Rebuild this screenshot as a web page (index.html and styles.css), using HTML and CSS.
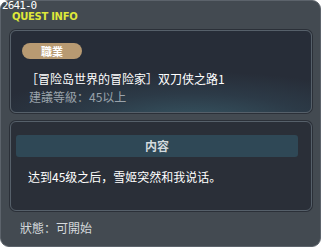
FILE: index.html
```html
<!DOCTYPE html>
<html lang="zh-CN">
<head>
	<meta charset="utf-8"/>
	<title>Quest Info</title>
	<link rel="stylesheet" href="styles.css">
</head>
<body>
<div class="quest_panel">
	<div class="quest_head">
		<div class="quest_id">2641-0</div>
		<div class="quest_title">QUEST INFO</div>
	</div>
	<div class="quest_box quest_box_job">
		<span class="job_badge">職業</span>
		<p class="job_name">［冒险岛世界的冒险家］双刀侠之路1</p>
		<p class="job_level">建議等級：45以上</p>
	</div>
	<div class="quest_box quest_box_desc">
		<div class="desc_bar">内容</div>
		<p class="desc_text">达到45级之后，雪姬突然和我说话。</p>
	</div>
	<div class="quest_state">狀態：可開始</div>
</div>
</body>
</html>
```

FILE: styles.css
```css
html,body{
	margin:0;
	padding:0;
	background:#fff;
}
body{
	font-family:"Noto Sans CJK SC","DejaVu Sans",sans-serif;
	font-size:12px;
}
p{
	margin:0;
}
/*外框*/
.quest_panel{
	box-sizing:border-box;
	width:321px;
	height:247px;
	background:#434a51;
	border:1px solid #5c636b;
	border-radius:9px;
	padding:0 8px 0 9px;
	display:flex;
	flex-direction:column;
}
.quest_head{
	height:29px;
	margin-left:-9px;
}
.quest_id{
	font-family:"DejaVu Sans Mono",monospace;
	font-size:11px;
	line-height:10px;
	color:#fff;
	padding-left:1px;
	letter-spacing:-0.9px;
}
.quest_title{
	font-family:"DejaVu Sans",sans-serif;
	font-weight:bold;
	font-size:10px;
	line-height:11px;
	color:#dfe83a;
	padding-left:11px;
	letter-spacing:-0.3px;
}
/*内容框*/
.quest_box{
	box-sizing:border-box;
	border:1px solid #56606a;
	border-radius:6px;
	box-shadow:0 0 0 1px #2b3038;
}
.quest_box_job{
	height:83px;
	padding:11px 0 0 11px;
	background:radial-gradient(ellipse 70% 60% at 60% 110%,#365461 0%,#2c3a47 55%,#272d38 100%);
}
.job_badge{
	display:inline-block;
	width:60px;
	height:16px;
	line-height:16px;
	text-align:center;
	border-radius:8px;
	background:#b89a72;
	color:#fff;
	font-weight:bold;
	font-size:11px;
}
.job_name{
	margin-top:11px;
	color:#fff;
	line-height:18px;
	padding-left:4px;
}
.job_level{
	color:#9aa3ab;
	line-height:18px;
	padding-left:7px;
}
.quest_box_desc{
	margin-top:8px;
	height:90px;
	padding:13px 13px 0 5px;
	background:#2a2f38;
}
.desc_bar{
	height:22px;
	line-height:22px;
	text-align:center;
	background:#2f4856;
	border-radius:3px;
	color:#d3dade;
	font-weight:bold;
}
.desc_text{
	margin-top:11px;
	padding-left:12px;
	color:#fff;
	line-height:18px;
}
.quest_state{
	margin-top:8px;
	padding-left:10px;
	line-height:18px;
	color:#d6dadd;
}
```
